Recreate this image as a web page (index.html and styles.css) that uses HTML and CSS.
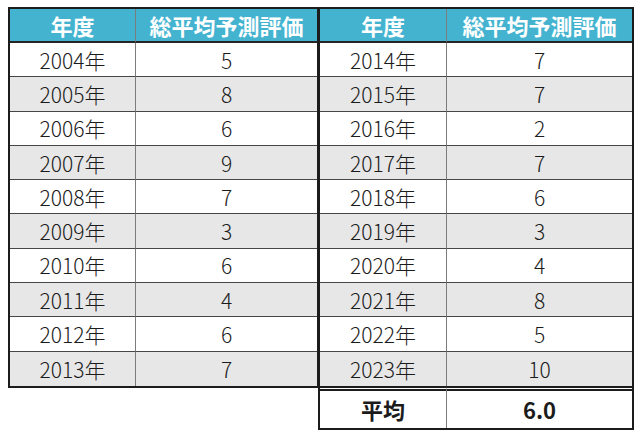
FILE: index.html
```html
<!DOCTYPE html>
<html lang="ja">
<head>
<meta charset="utf-8">
<link rel="stylesheet" href="styles.css">
</head>
<body>
<div class="wrap">
  <div class="tbl tbl-left">
    <div class="c h k">年度</div><div class="c h">総平均予測評価</div>
    <div class="c k">2004年</div><div class="c">5</div>
    <div class="c k g">2005年</div><div class="c g">8</div>
    <div class="c k">2006年</div><div class="c">6</div>
    <div class="c k g">2007年</div><div class="c g">9</div>
    <div class="c k">2008年</div><div class="c">7</div>
    <div class="c k g">2009年</div><div class="c g">3</div>
    <div class="c k">2010年</div><div class="c">6</div>
    <div class="c k g">2011年</div><div class="c g">4</div>
    <div class="c k">2012年</div><div class="c">6</div>
    <div class="c k g last">2013年</div><div class="c g last">7</div>
  </div>
  <div class="tbl tbl-right">
    <div class="c h k">年度</div><div class="c h">総平均予測評価</div>
    <div class="c k">2014年</div><div class="c">7</div>
    <div class="c k g">2015年</div><div class="c g">7</div>
    <div class="c k">2016年</div><div class="c">2</div>
    <div class="c k g">2017年</div><div class="c g">7</div>
    <div class="c k">2018年</div><div class="c">6</div>
    <div class="c k g">2019年</div><div class="c g">3</div>
    <div class="c k">2020年</div><div class="c">4</div>
    <div class="c k g">2021年</div><div class="c g">8</div>
    <div class="c k">2022年</div><div class="c">5</div>
    <div class="c k g last">2023年</div><div class="c g last">10</div>
    <div class="c k avg">平均</div><div class="c avg">6.0</div>
  </div>
</div>
</body>
</html>
```
FILE: styles.css
```css
html, body {
  margin: 0;
  background: #ffffff;
}
body {
  font-family: "Noto Sans CJK JP", "Noto Sans", sans-serif;
  color: #1b1b1b;
}
.wrap {
  display: flex;
  align-items: flex-start;
  padding: 7px 0 0 8px;
}
.tbl {
  display: grid;
  border: 2px solid #1c1c1c;
}
.tbl-left {
  grid-template-columns: 126px 181px;
}
.tbl-right {
  margin-left: -1px;
  grid-template-columns: 127px 185px;
}
.c {
  box-sizing: border-box;
  height: 34.3px;
  display: flex;
  align-items: center;
  justify-content: center;
  font-size: 21px;
  font-weight: 300;
  border-bottom: 1px solid #464646;
}
.k {
  border-right: 1px solid #7c7c7c;
}
.g {
  background: #e7e7e7;
}
.h {
  height: 34px;
  background: #44b3d0;
  color: #ffffff;
  font-weight: 700;
  font-size: 22px;
  border-bottom: 2px solid #252525;
}
.last {
  border-bottom: none;
}
.avg {
  height: 42px;
  border-top: 5px double #1c1c1c;
  border-bottom: none;
  font-weight: 700;
  font-size: 22px;
}
```
